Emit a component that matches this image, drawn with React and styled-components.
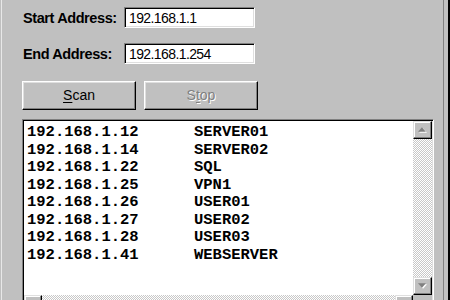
import React from 'react';
import styled, { createGlobalStyle } from 'styled-components';

const GlobalStyle = createGlobalStyle`
  html, body {
    margin: 0;
    padding: 0;
    background: #c0c0c0;
  }
`;

const hosts = [
  { ip: '192.168.1.12', name: 'SERVER01' },
  { ip: '192.168.1.14', name: 'SERVER02' },
  { ip: '192.168.1.22', name: 'SQL' },
  { ip: '192.168.1.25', name: 'VPN1' },
  { ip: '192.168.1.26', name: 'USER01' },
  { ip: '192.168.1.27', name: 'USER02' },
  { ip: '192.168.1.28', name: 'USER03' },
  { ip: '192.168.1.41', name: 'WEBSERVER' },
];

const Window = styled.div`
  width: 450px;
  height: 300px;
  overflow: hidden;
  box-sizing: border-box;
  background: #c0c0c0;
  padding: 7px 0 0 22px;
  box-shadow: inset 1px 0 #c0c0c0, inset 2px 0 #e8e8e8,
    inset -2px 0 #000, inset -6px 0 #c0c0c0, inset -7px 0 #808080;
  font-family: 'Liberation Sans', Arial, sans-serif;
`;

const Field = styled.div`
  display: grid;
  grid-template-columns: 102px 131px;
  align-items: center;
  height: 21px;
  margin-bottom: ${(p) => p.gap || 0}px;
`;

const Label = styled.label`
  font-size: 14.5px;
  font-weight: bold;
  letter-spacing: -0.4px;
  color: #000;
  padding-left: 1px;
`;

const Input = styled.div`
  height: 21px;
  box-sizing: border-box;
  background: #fff;
  border-top: 1px solid #808080;
  border-left: 1px solid #808080;
  border-right: 1px solid #fff;
  border-bottom: 1px solid #fff;
  box-shadow: inset 1px 1px #000, inset -1px -1px #dfdfdf;
  padding: 0 0 0 4px;
  display: flex;
  align-items: center;
  font-size: 14px;
  letter-spacing: -0.6px;
  color: #000;
`;

const Buttons = styled.div`
  display: flex;
  gap: 8px;
  margin: 17px 0 9px;
`;

const Button = styled.div`
  width: 114px;
  height: 29px;
  box-sizing: border-box;
  display: flex;
  align-items: center;
  justify-content: center;
  font-size: 14px;
  color: ${(p) => (p.disabled ? '#808080' : '#000')};
  text-shadow: ${(p) => (p.disabled ? '1px 1px #fff' : 'none')};
  background: #c0c0c0;
  border-top: 1px solid #fff;
  border-left: 1px solid #fff;
  border-right: 1px solid #000;
  border-bottom: 1px solid #000;
  box-shadow: inset -1px -1px #808080, inset 1px 1px #dfdfdf;
  padding-bottom: 1px;

  u {
    text-underline-offset: 2px;
  }
`;

const ListBox = styled.div`
  width: 412px;
  height: 200px;
  box-sizing: border-box;
  background: #fff;
  border-top: 1px solid #808080;
  border-left: 1px solid #808080;
  border-right: 1px solid #fff;
  border-bottom: 1px solid #fff;
  box-shadow: inset 1px 1px #000, inset -1px -1px #dfdfdf;
  padding: 1px;
  display: grid;
  grid-template-columns: 1fr 19px;
  grid-template-rows: 174px 19px;
`;

const Rows = styled.div`
  padding: 3px 0 0 3px;
  font-family: 'Liberation Mono', 'DejaVu Sans Mono', monospace;
  font-weight: bold;
  font-size: 15.5px;
  line-height: 17.5px;
  color: #000;
`;

const Row = styled.div`
  display: grid;
  grid-template-columns: 167px auto;
`;

const Track = styled.div`
  background: repeating-conic-gradient(#c8c8c8 0 25%, #fff 0 50%) 0 0 / 2px 2px;
  display: flex;
  flex-direction: ${(p) => (p.horizontal ? 'row' : 'column')};
  justify-content: space-between;
`;

const ScrollBtn = styled.div`
  width: ${(p) => (p.horizontal ? 18 : 19)}px;
  height: ${(p) => (p.horizontal ? 19 : 18)}px;
  box-sizing: border-box;
  background: #c0c0c0;
  border-top: 1px solid #dfdfdf;
  border-left: 1px solid #dfdfdf;
  border-right: 1px solid #000;
  border-bottom: 1px solid #000;
  box-shadow: inset -1px -1px #808080, inset 1px 1px #fff;
  display: flex;
  align-items: center;
  justify-content: center;
`;

const Corner = styled.div`
  background: #c0c0c0;
`;

function Arrow({ dir }) {
  const pts = {
    up: '0,4 3.5,0 7,4',
    down: '0,0 3.5,4 7,0',
    left: '4,0 0,3.5 4,7',
    right: '0,0 4,3.5 0,7',
  }[dir];
  const vertical = dir === 'up' || dir === 'down';
  return (
    <svg width={vertical ? 9 : 6} height={vertical ? 6 : 9} viewBox={vertical ? '0 0 8 5' : '0 0 5 8'}>
      <polygon points={pts} fill="#fff" transform="translate(1,1)" />
      <polygon points={pts} fill="#808080" />
    </svg>
  );
}

export default function App() {
  return (
    <>
      <GlobalStyle />
      <Window>
        <Field gap={15}>
          <Label>Start Address:</Label>
          <Input>192.168.1.1</Input>
        </Field>
        <Field>
          <Label>End Address:</Label>
          <Input>192.168.1.254</Input>
        </Field>
        <Buttons>
          <Button>
            <span>
              <u>S</u>can
            </span>
          </Button>
          <Button disabled>
            <span>
              S<u>t</u>op
            </span>
          </Button>
        </Buttons>
        <ListBox>
          <Rows>
            {hosts.map((h) => (
              <Row key={h.ip}>
                <span>{h.ip}</span>
                <span>{h.name}</span>
              </Row>
            ))}
          </Rows>
          <Track>
            <ScrollBtn>
              <Arrow dir="up" />
            </ScrollBtn>
            <ScrollBtn>
              <Arrow dir="down" />
            </ScrollBtn>
          </Track>
          <Track horizontal>
            <ScrollBtn horizontal>
              <Arrow dir="left" />
            </ScrollBtn>
            <ScrollBtn horizontal>
              <Arrow dir="right" />
            </ScrollBtn>
          </Track>
          <Corner />
        </ListBox>
      </Window>
    </>
  );
}
